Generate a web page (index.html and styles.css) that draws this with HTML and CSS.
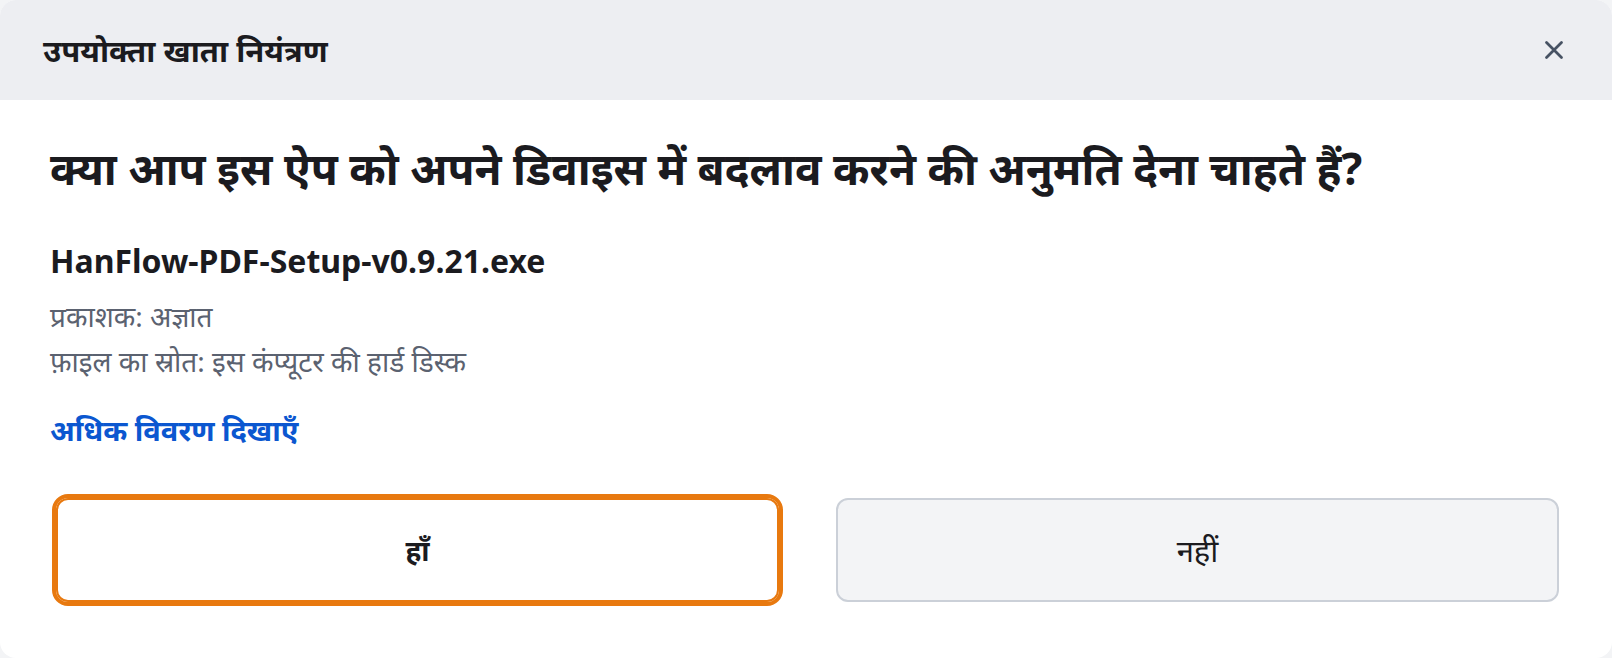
FILE: index.html
```html
<!DOCTYPE html>
<html lang="hi">

<head>
    <meta charset="UTF-8">
    <meta name="viewport" content="width=device-width, initial-scale=1.0">
    <title>उपयोक्ता खाता नियंत्रण</title>
    <link rel="stylesheet" href="styles.css">
</head>

<body>
    <div class="dialog">
        <!-- Title bar -->
        <div class="titlebar">
            <h1>उपयोक्ता खाता नियंत्रण</h1>
            <button class="close-btn" aria-label="बंद करें">
                <svg width="20" height="20" viewBox="0 0 20 20">
                    <path d="M2.5 2.5 L17.5 17.5 M17.5 2.5 L2.5 17.5" stroke="#475263" stroke-width="2.8" stroke-linecap="round" fill="none" />
                </svg>
            </button>
        </div>

        <!-- Body -->
        <div class="content">
            <h2 class="question">क्या आप इस ऐप को अपने डिवाइस में बदलाव करने की अनुमति देना चाहते हैं?</h2>
            <p class="app-name">HanFlow-PDF-Setup-v0.9.21.exe</p>
            <div class="meta">
                <p>प्रकाशक: अज्ञात</p>
                <p>फ़ाइल का स्रोत: इस कंप्यूटर की हार्ड डिस्क</p>
            </div>
            <a href="#" class="details-link">अधिक विवरण दिखाएँ</a>

            <div class="actions">
                <button class="btn btn-yes">हाँ</button>
                <button class="btn btn-no">नहीं</button>
            </div>
        </div>
    </div>
</body>

</html>
```

FILE: styles.css
```css
:root {
    --page-bg: #f3f4f6;
    --header-bg: #edeef2;
    --text-color: #1b1b1f;
    --muted-color: #5b6270;
    --link-color: #0b57d0;
    --focus-color: #e8790f;
    --btn-bg: #f3f4f6;
    --btn-border: #cbd0d8;
}

body {
    font-family: 'Noto Sans', 'Noto Sans Devanagari', sans-serif;
    margin: 0;
    padding: 0;
    background-color: var(--page-bg);
    color: var(--text-color);
}

/* Dialog */
.dialog {
    height: 100vh;
    background: #fff;
    border-radius: 16px;
    overflow: hidden;
    box-sizing: border-box;
}

.titlebar {
    height: 100px;
    background: var(--header-bg);
    display: flex;
    justify-content: space-between;
    align-items: center;
    padding: 0 48px 0 43px;
}

.titlebar h1 {
    margin: 0;
    font-size: 31px;
    font-weight: bold;
}

.close-btn {
    background: none;
    border: none;
    padding: 0;
    display: flex;
    cursor: pointer;
}

/* Body */
.content {
    padding: 0 50px;
}

.question {
    margin: 40px 0 0;
    font-size: 44px;
    line-height: 56px;
    font-weight: bold;
}

.app-name {
    margin: 43px 0 0;
    font-size: 32px;
    line-height: 44px;
    font-weight: bold;
}

.meta {
    margin-top: 11px;
    color: var(--muted-color);
    font-size: 28px;
}

.meta p {
    margin: 0;
    line-height: 45px;
}

.details-link {
    display: inline-block;
    margin-top: 26px;
    font-size: 29px;
    line-height: 40px;
    font-weight: bold;
    color: var(--link-color);
    text-decoration: none;
}

/* Buttons */
.actions {
    display: grid;
    grid-template-columns: 1fr 1fr;
    gap: 57px;
    margin-top: 48px;
    padding: 0 3px 0 6px;
}

.btn {
    height: 104px;
    border-radius: 12px;
    border: 2px solid var(--btn-border);
    background: var(--btn-bg);
    font-family: inherit;
    font-size: 31px;
    color: var(--text-color);
    cursor: pointer;
}

.btn-yes {
    background: #fff;
    border-color: var(--focus-color);
    outline: 4px solid var(--focus-color);
    font-size: 28px;
    font-weight: bold;
}
```
